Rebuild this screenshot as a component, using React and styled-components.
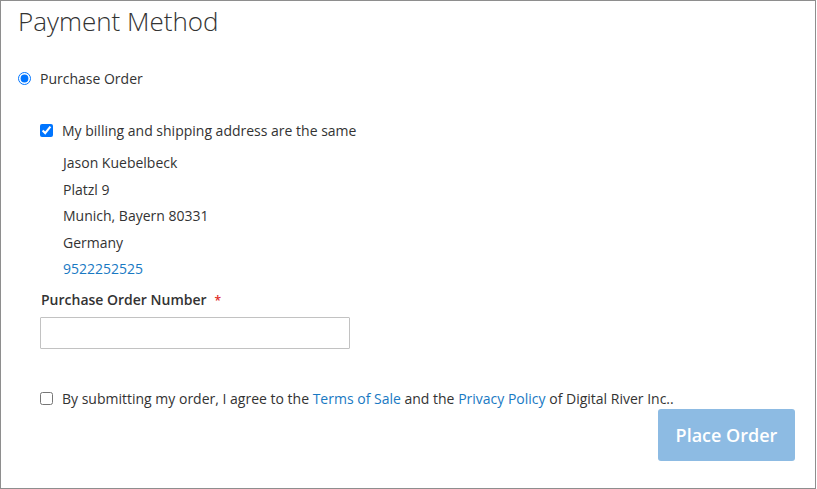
import React from 'react';
import styled, { createGlobalStyle } from 'styled-components';

const GlobalStyle = createGlobalStyle`
  html, body {
    margin: 0;
    padding: 0;
    background: #fff;
  }
  body {
    font-family: 'Open Sans', 'Liberation Sans', sans-serif;
    color: #333;
    font-size: 14px;
  }
`;

const Frame = styled.div`
  box-sizing: border-box;
  width: 816px;
  height: 489px;
  border: 1px solid #8e8e8e;
  padding: 0 20px 0 17px;
  overflow: hidden;
`;

const Title = styled.h2`
  margin: 2px 0 0;
  font-size: 26px;
  font-weight: 300;
  line-height: 36px;
  color: #333;
`;

const MethodRow = styled.label`
  display: flex;
  align-items: center;
  gap: 9px;
  margin-top: 28px;
  height: 22px;
`;

const Radio = styled.input.attrs({ type: 'radio' })`
  margin: 0;
  width: 13px;
  height: 13px;
  accent-color: #0075ff;
`;

const Content = styled.div`
  padding-left: 22px;
  margin-top: 30px;
`;

const CheckRow = styled.label`
  display: flex;
  align-items: center;
  gap: ${(p) => p.$gap || 9}px;
  height: 22px;
`;

const Check = styled.input.attrs({ type: 'checkbox' })`
  margin: 0;
  width: 13px;
  height: 13px;
  accent-color: #0075ff;
`;

const Address = styled.address`
  font-style: normal;
  padding-left: 23px;
  margin-top: 9px;
  line-height: 26.5px;
`;

const Phone = styled.a`
  color: #1979c3;
  text-decoration: none;
`;

const Field = styled.div`
  margin-top: 6px;
`;

const FieldLabel = styled.div`
  font-weight: 600;
  line-height: 22px;
  padding-left: 1px;

  &::after {
    content: '*';
    color: #e02b27;
    font-size: 12px;
    margin-left: 8px;
  }
`;

const TextInput = styled.input`
  display: block;
  box-sizing: border-box;
  margin-top: 5px;
  width: 310px;
  height: 32px;
  border: 1px solid #c2c2c2;
  border-radius: 1px;
  font: inherit;
`;

const Agreement = styled.div`
  margin-top: 39px;
`;

const Link = styled.a`
  color: #1979c3;
  text-decoration: none;
`;

const Actions = styled.div`
  display: flex;
  justify-content: flex-end;
  margin-top: -1px;
`;

const PlaceButton = styled.button`
  width: 137px;
  height: 52px;
  border: none;
  border-radius: 3px;
  background: #8dbbe3;
  color: #fff;
  font-family: inherit;
  font-size: 18px;
  font-weight: 600;
  padding: 0;
`;

export default function App() {
  return (
    <>
      <GlobalStyle />
      <Frame>
        <Title>Payment Method</Title>
        <MethodRow>
          <Radio name="payment" defaultChecked />
          <span>Purchase Order</span>
        </MethodRow>
        <Content>
          <CheckRow>
            <Check defaultChecked />
            <span>My billing and shipping address are the same</span>
          </CheckRow>
          <Address>
            Jason Kuebelbeck
            <br />
            Platzl 9
            <br />
            Munich, Bayern 80331
            <br />
            Germany
            <br />
            <Phone href="#">9522252525</Phone>
          </Address>
          <Field>
            <FieldLabel>Purchase Order Number</FieldLabel>
            <TextInput type="text" />
          </Field>
          <Agreement>
            <CheckRow>
              <Check />
              <span>
                By submitting my order, I agree to the <Link href="#">Terms of Sale</Link> and the{' '}
                <Link href="#">Privacy Policy</Link> of Digital River Inc..
              </span>
            </CheckRow>
          </Agreement>
          <Actions>
            <PlaceButton type="button">Place Order</PlaceButton>
          </Actions>
        </Content>
      </Frame>
    </>
  );
}
